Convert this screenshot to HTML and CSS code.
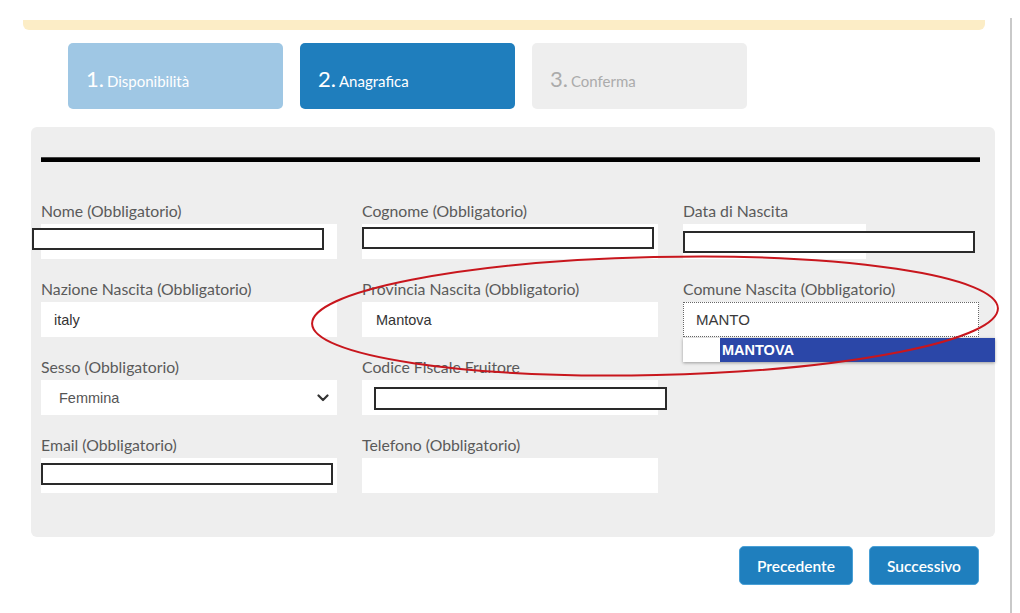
FILE: index.html
```html
<!DOCTYPE html>
<html lang="it">
<head>
<meta charset="utf-8">
<title>Anagrafica</title>
<link rel="stylesheet" href="styles.css">
</head>
<body>
<div class="page">
  <div class="notice"></div>
  <nav class="steps">
    <div class="step step-done"><span class="num">1.</span><span class="step-label">Disponibilità</span></div>
    <div class="step step-active"><span class="num">2.</span><span class="step-label">Anagrafica</span></div>
    <div class="step step-todo"><span class="num">3.</span><span class="step-label">Conferma</span></div>
  </nav>
  <section class="panel">
    <div class="rule"></div>
    <div class="grid">
      <div class="field">
        <label class="label">Nome (Obbligatorio)</label>
        <div class="box"><div class="frame frame-nome"></div></div>
      </div>
      <div class="field">
        <label class="label">Cognome (Obbligatorio)</label>
        <div class="box"><div class="frame frame-cognome"></div></div>
      </div>
      <div class="field">
        <label class="label">Data di Nascita</label>
        <div class="box box-narrow"><div class="frame frame-data"></div></div>
      </div>

      <div class="field">
        <label class="label">Nazione Nascita (Obbligatorio)</label>
        <div class="box"><span class="value">italy</span></div>
      </div>
      <div class="field">
        <label class="label">Provincia Nascita (Obbligatorio)</label>
        <div class="box"><span class="value value-prov">Mantova</span></div>
      </div>
      <div class="field field-comune">
        <label class="label">Comune Nascita (Obbligatorio)</label>
        <div class="box box-focus"><span class="value value-comune">MANTO</span></div>
        <ul class="suggest">
          <li class="suggest-item"><span class="suggest-gap"></span><span class="suggest-text">MANTOVA</span></li>
        </ul>
      </div>

      <div class="field">
        <label class="label">Sesso (Obbligatorio)</label>
        <div class="box box-select">
          <span class="value value-select">Femmina</span>
          <svg class="chevron" width="12" height="8" viewBox="0 0 12 8"><path d="M1.5 1.5 L6 6 L10.5 1.5" fill="none" stroke="#333" stroke-width="2.2" stroke-linecap="round" stroke-linejoin="round"/></svg>
        </div>
      </div>
      <div class="field">
        <label class="label">Codice Fiscale Fruitore</label>
        <div class="box"><div class="frame frame-cf"></div></div>
      </div>
      <div class="field"></div>

      <div class="field">
        <label class="label">Email (Obbligatorio)</label>
        <div class="box"><div class="frame frame-email"></div></div>
      </div>
      <div class="field">
        <label class="label">Telefono (Obbligatorio)</label>
        <div class="box"></div>
      </div>
    </div>
  </section>
  <div class="actions">
    <button class="btn btn-prev">Precedente</button>
    <button class="btn btn-next">Successivo</button>
  </div>
  <svg class="annotation" width="1010" height="613" viewBox="0 0 1010 613">
    <ellipse cx="655" cy="316" rx="343" ry="59" transform="rotate(-1.3 655 316)" fill="none" stroke="#c8161d" stroke-width="2"/>
  </svg>
</div>
</body>
</html>
```
FILE: styles.css
```css
* { box-sizing: border-box; }
html, body { margin: 0; padding: 0; background: #fff; }
body { font-family: "Lato", "Open Sans", sans-serif; color: #555; }

.page {
  position: relative;
  width: 1012px;
  height: 595px;
  margin-top: 18px;
  padding-top: 2px;
  border-right: 2px solid #c9c9c9;
}

.notice {
  margin-left: 23px;
  width: 962px;
  height: 10px;
  background: #fcedc6;
  border-radius: 0 0 6px 6px;
}

.steps {
  display: flex;
  gap: 17px;
  margin-top: 13px;
  padding-left: 68px;
}
.step {
  width: 215px;
  height: 66px;
  border-radius: 5px;
  display: flex;
  align-items: baseline;
  padding: 22px 0 0 18px;
  color: #fff;
}
.num { font-size: 22px; margin-right: 3px; }
.step-label { font-size: 15px; }
.step-done { background: #9fc7e4; }
.step-active { background: #1f7ebd; }
.step-todo { background: #eeeeee; color: #ababab; }

.panel {
  margin: 18px 0 0 31px;
  width: 964px;
  height: 410px;
  background: #eeeeee;
  border-radius: 6px;
  padding: 30px 15px 0 10px;
}
.rule {
  width: 939px;
  height: 5px;
  background: #000;
  border-top: 1px solid #444;
}

.grid {
  margin-top: 39px;
  display: grid;
  grid-template-columns: 296px 296px 296px;
  column-gap: 25px;
  row-gap: 20px;
}
.field { position: relative; }
.label {
  display: block;
  font-size: 15.8px;
  line-height: 20px;
  margin-bottom: 3px;
  color: #5a5a5a;
}
.box {
  height: 35px;
  background: #fff;
  display: flex;
  align-items: center;
}
.box-narrow { width: 183px; }
.frame {
  align-self: flex-start;
  flex: none;
  width: 292px;
  height: 22px;
  border: 2px solid #2a2a2a;
  background: #fff;
}
.frame-nome { margin: 4px 0 0 -9px; height: 22px; }
.frame-cognome { margin-top: 3px; }
.frame-data { margin-top: 7px; }
.frame-cf { margin: 7px 0 0 12px; width: 293px; height: 23px; }
.frame-email { margin-top: 5px; }

.value {
  font-family: "Liberation Sans", Arial, sans-serif;
  font-size: 14.5px;
  color: #333;
  padding-left: 13px;
}
.value-prov { padding-left: 14px; }
.value-comune { padding-left: 12px; font-size: 15px; color: #3a3a3a; }
.box-focus { border: 1px dotted #666; }
.box-select { justify-content: space-between; padding-right: 8px; }
.value-select { padding-left: 18px; color: #555; }

.suggest {
  position: absolute;
  top: 59px;
  left: 0;
  width: 312px;
  margin: 0;
  padding: 0;
  list-style: none;
  box-shadow: 0 1px 3px rgba(0,0,0,0.35);
}
.suggest-item { display: flex; height: 24px; }
.suggest-gap { width: 37px; background: #fff; }
.suggest-text {
  flex: 1;
  background: #2b47a8;
  color: #fff;
  font-family: "Liberation Sans", Arial, sans-serif;
  font-size: 14.5px;
  font-weight: bold;
  line-height: 24px;
  padding-left: 2px;
}

.actions {
  width: 979px;
  margin-top: 9px;
  display: flex;
  justify-content: flex-end;
  gap: 16px;
}
.btn {
  height: 39px;
  border: 1px solid #4aa0d6;
  border-radius: 5px;
  background: #1f7fbe;
  color: #fff;
  font-family: "Lato", sans-serif;
  font-size: 15.5px;
  font-weight: 600;
  padding: 0;
}
.btn-prev { width: 114px; }
.btn-next { width: 110px; }

.annotation {
  position: absolute;
  left: 0;
  top: -18px;
  pointer-events: none;
}
```
